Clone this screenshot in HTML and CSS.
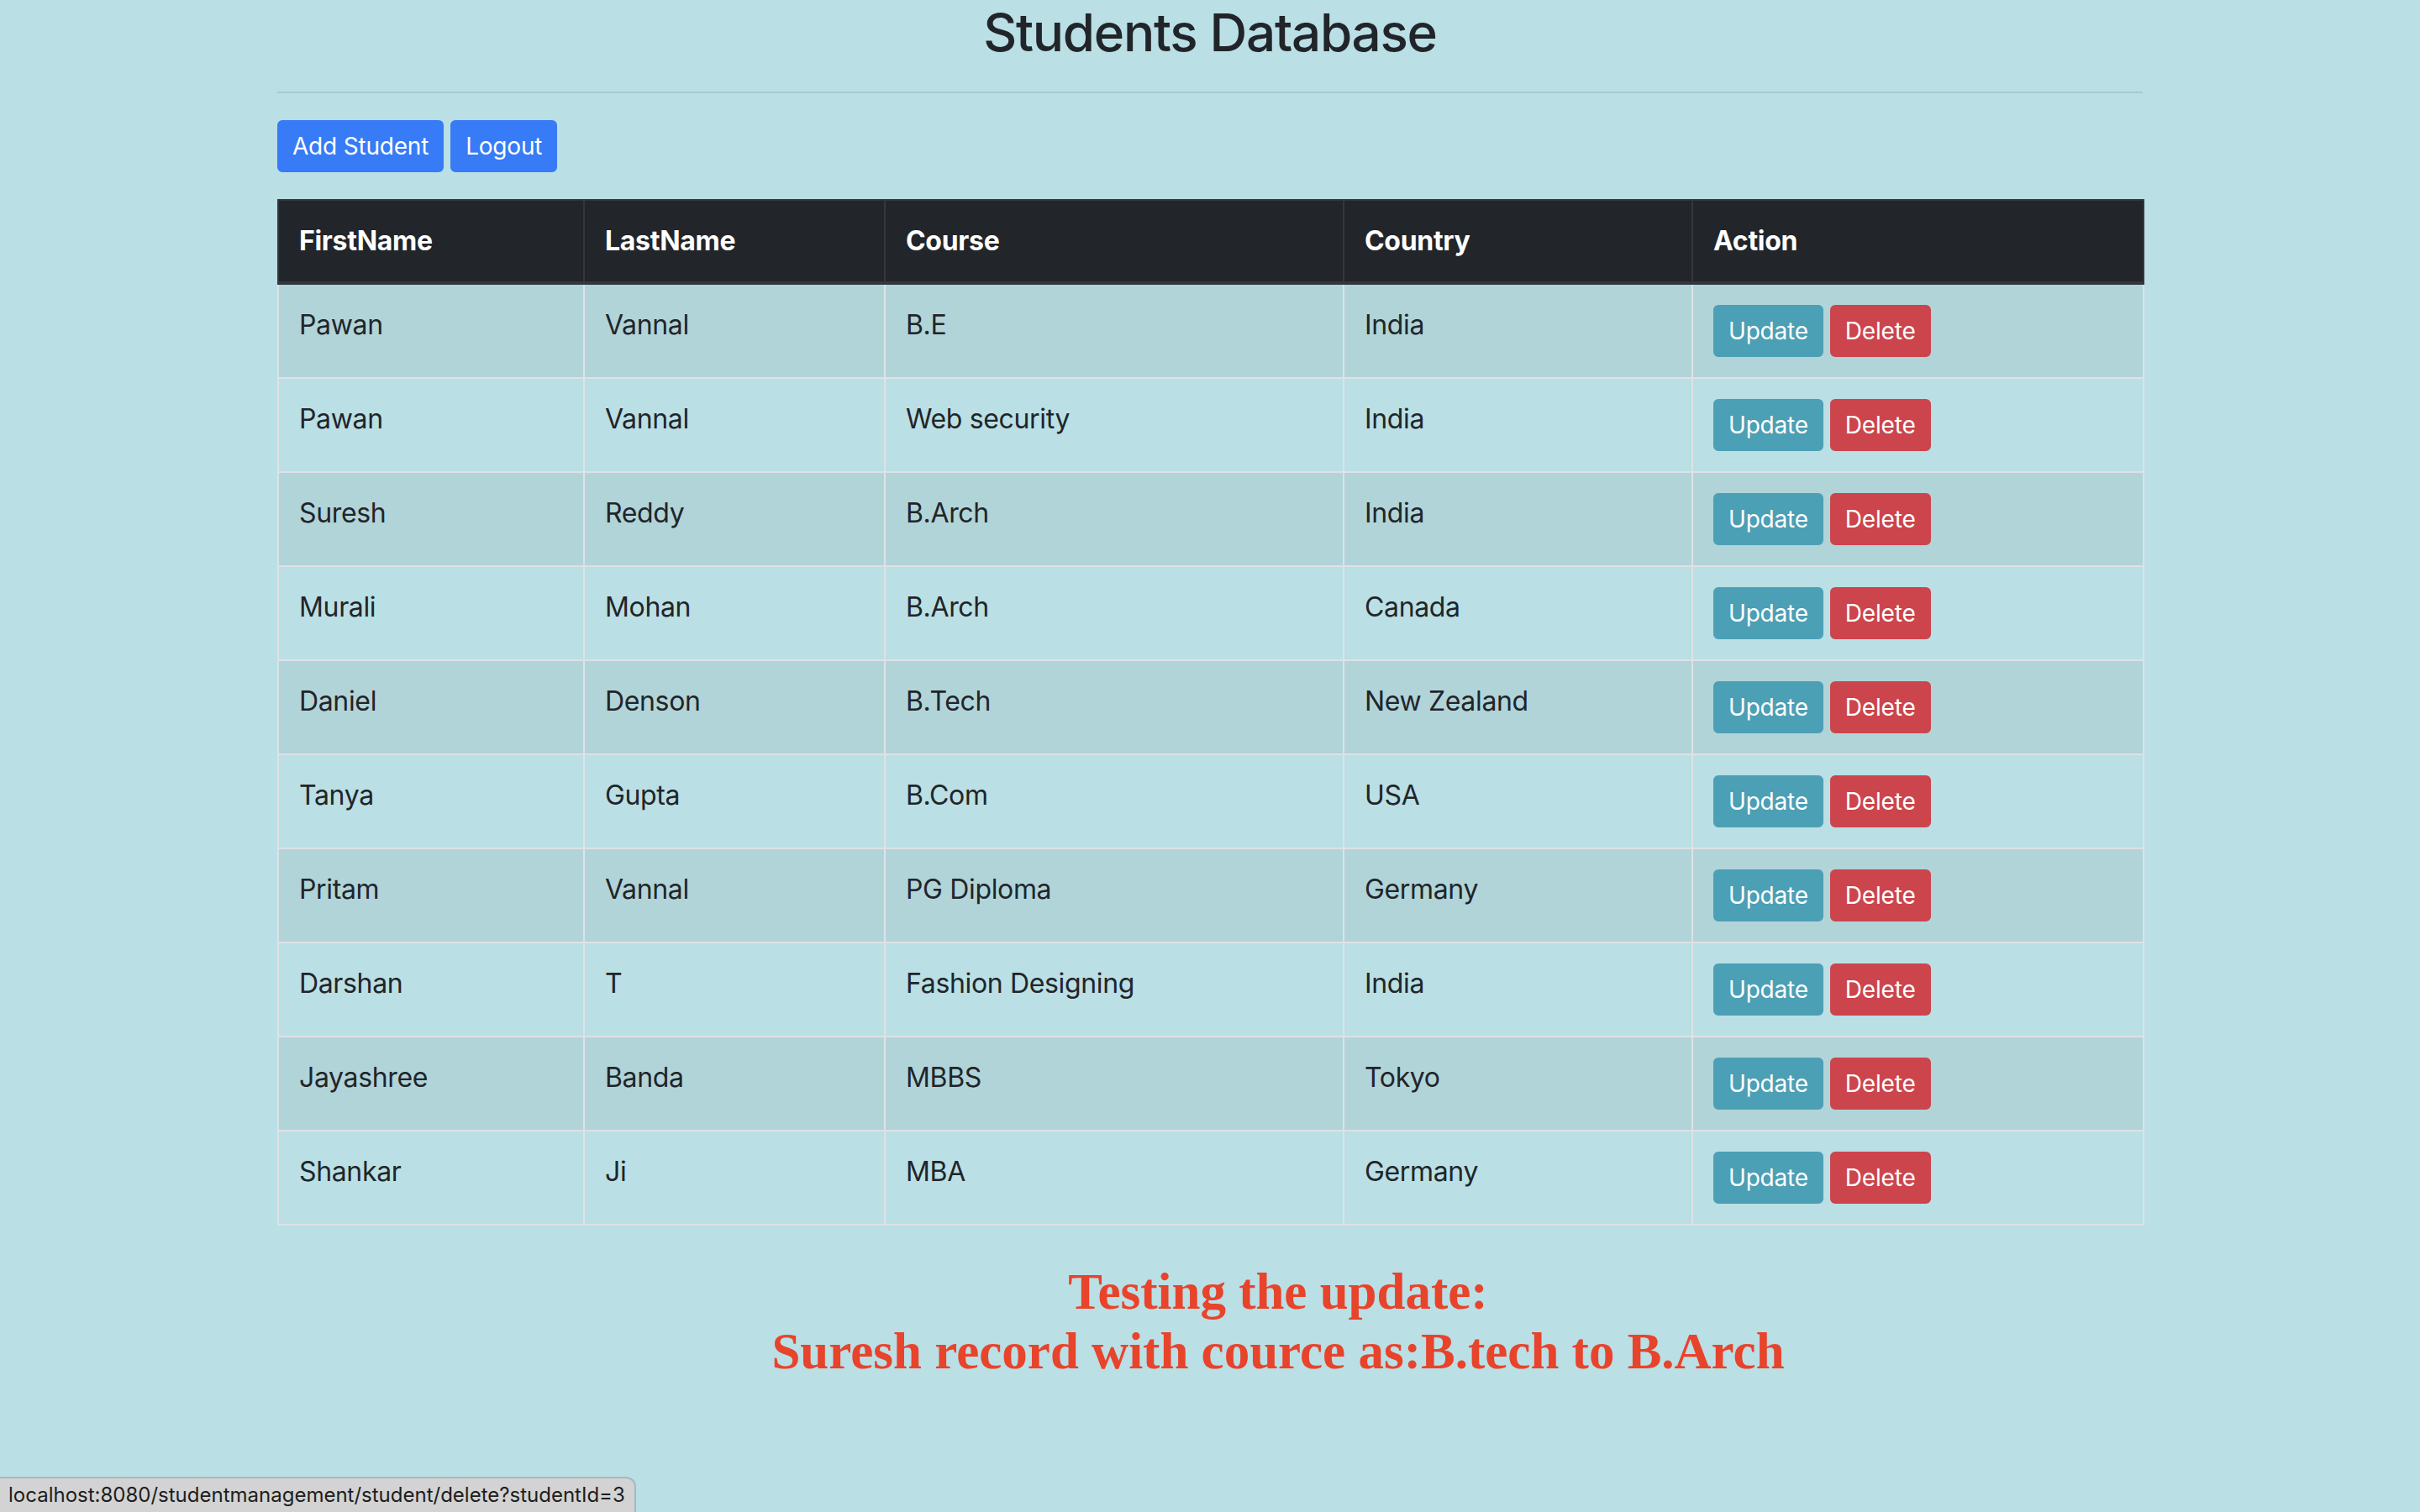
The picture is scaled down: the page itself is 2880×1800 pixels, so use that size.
FILE: index.html
```html
<!DOCTYPE html>
<html lang="en">
<head>
<meta charset="utf-8">
<title>Students Database</title>
<link rel="stylesheet" href="styles.css">
</head>
<body>
<div class="container">
  <h1 class="title">Students Database</h1>
  <hr class="rule">
  <div class="toolbar">
    <a class="btn btn-primary" href="#">Add Student</a>
    <a class="btn btn-primary" href="#">Logout</a>
  </div>
  <table class="table">
    <colgroup>
      <col class="c-first">
      <col class="c-last">
      <col class="c-course">
      <col class="c-country">
      <col class="c-action">
    </colgroup>
    <thead>
      <tr><th>FirstName</th><th>LastName</th><th>Course</th><th>Country</th><th>Action</th></tr>
    </thead>
    <tbody>
      <tr><td>Pawan</td><td>Vannal</td><td>B.E</td><td>India</td><td class="actions"><a class="btn btn-info" href="#">Update</a><a class="btn btn-danger" href="#">Delete</a></td></tr>
      <tr><td>Pawan</td><td>Vannal</td><td>Web security</td><td>India</td><td class="actions"><a class="btn btn-info" href="#">Update</a><a class="btn btn-danger" href="#">Delete</a></td></tr>
      <tr><td>Suresh</td><td>Reddy</td><td>B.Arch</td><td>India</td><td class="actions"><a class="btn btn-info" href="#">Update</a><a class="btn btn-danger" href="#">Delete</a></td></tr>
      <tr><td>Murali</td><td>Mohan</td><td>B.Arch</td><td>Canada</td><td class="actions"><a class="btn btn-info" href="#">Update</a><a class="btn btn-danger" href="#">Delete</a></td></tr>
      <tr><td>Daniel</td><td>Denson</td><td>B.Tech</td><td>New Zealand</td><td class="actions"><a class="btn btn-info" href="#">Update</a><a class="btn btn-danger" href="#">Delete</a></td></tr>
      <tr><td>Tanya</td><td>Gupta</td><td>B.Com</td><td>USA</td><td class="actions"><a class="btn btn-info" href="#">Update</a><a class="btn btn-danger" href="#">Delete</a></td></tr>
      <tr><td>Pritam</td><td>Vannal</td><td>PG Diploma</td><td>Germany</td><td class="actions"><a class="btn btn-info" href="#">Update</a><a class="btn btn-danger" href="#">Delete</a></td></tr>
      <tr><td>Darshan</td><td>T</td><td>Fashion Designing</td><td>India</td><td class="actions"><a class="btn btn-info" href="#">Update</a><a class="btn btn-danger" href="#">Delete</a></td></tr>
      <tr><td>Jayashree</td><td>Banda</td><td>MBBS</td><td>Tokyo</td><td class="actions"><a class="btn btn-info" href="#">Update</a><a class="btn btn-danger" href="#">Delete</a></td></tr>
      <tr><td>Shankar</td><td>Ji</td><td>MBA</td><td>Germany</td><td class="actions"><a class="btn btn-info" href="#">Update</a><a class="btn btn-danger" href="#">Delete</a></td></tr>
    </tbody>
  </table>
</div>
<div class="note">
  <div>Testing the update:</div>
  <div>Suresh record with cource as:B.tech to B.Arch</div>
</div>
<div class="statusbar">localhost:8080/studentmanagement/student/delete?studentId=3</div>
</body>
</html>
```
FILE: styles.css
```css
* { box-sizing: border-box; }

html, body {
  margin: 0;
  padding: 0;
}

body {
  background: #badfe5;
  color: #212529;
  font-family: Inter, "Noto Sans", "Liberation Sans", sans-serif;
  font-size: 32px;
  line-height: 1.5;
  min-height: 1800px;
}

.container {
  max-width: 2280px;
  margin: 0 auto;
  padding: 0 30px;
}

.title {
  margin: 0;
  font-size: 62px;
  font-weight: 500;
  line-height: 77px;
  text-align: center;
  letter-spacing: -1.3px;
  color: #212529;
}

.rule {
  margin: 32px 0;
  border: 0;
  border-top: 2px solid #a7c9ce;
  height: 0;
}

.toolbar {
  display: flex;
  gap: 8px;
  margin-bottom: 32px;
}

.btn {
  display: inline-block;
  font-size: 28px;
  line-height: 1.5;
  padding: 8px 16px;
  border: 2px solid transparent;
  border-radius: 6px;
  color: #fff;
  text-decoration: none;
  font-weight: 400;
  letter-spacing: -0.2px;
  vertical-align: top;
}

.btn-primary { background: #377bf6; border-color: #377bf6; }
.btn-info { background: #4ba0b5; border-color: #4ba0b5; }
.btn-danger { background: #cc454c; border-color: #cc454c; }

.table {
  width: 100%;
  border-collapse: collapse;
  table-layout: fixed;
  border: 2px solid #dee2e6;
}

.c-first { width: 364px; }
.c-last { width: 358px; }
.c-course { width: 546px; }
.c-country { width: 415px; }
.c-action { width: 537px; }

.table th,
.table td {
  padding: 24px;
  text-align: left;
  vertical-align: top;
  border: 2px solid #dee2e6;
  line-height: 48px;
}

.table td { letter-spacing: -0.35px; }

.table td.actions {
  font-size: 0;
  line-height: 0;
}

.actions .btn + .btn { margin-left: 8px; }

.table th {
  background: #222529;
  color: #fff;
  font-weight: 700;
  border-color: #32383e;
  border-bottom-width: 4px;
  letter-spacing: -0.3px;
}

.table tbody tr:nth-child(odd) { background: #b1d4d9; }

.note {
  margin: 43px 0 0 162px;
  text-align: center;
  font-family: "Liberation Serif", "Times New Roman", serif;
  font-weight: 700;
  font-size: 61px;
  line-height: 71px;
  color: #e8432b;
}

.statusbar {
  position: fixed;
  left: 0;
  bottom: 0;
  width: 757px;
  height: 42px;
  padding: 4px 0 0 10px;
  background: #d3d3d3;
  border: 2px solid #a9b8bb;
  border-left: 0;
  border-bottom: 0;
  border-top-right-radius: 12px;
  font-family: Inter, "Liberation Sans", sans-serif;
  font-size: 24px;
  line-height: 32px;
  color: #1d1d1d;
  white-space: nowrap;
  overflow: hidden;
}
```
